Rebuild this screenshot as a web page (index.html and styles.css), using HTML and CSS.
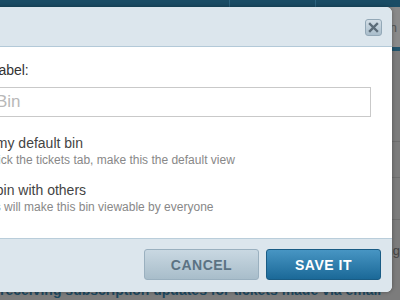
FILE: index.html
```html
<!DOCTYPE html>
<html lang="en">
<head>
  <meta charset="UTF-8">
  <title>Add New Bin</title>
  <link rel="stylesheet" href="styles.css">
</head>
<body>
  <!-- page behind the dialog (dimmed) -->
  <div class="page">
    <div class="topbar">
      <span class="nav-item first"></span>
      <span class="nav-item"></span>
      <span class="nav-item"></span>
    </div>
    <div class="subbar"><span>Assign</span></div>
    <div class="band"></div>
    <div class="row tall"></div>
    <div class="row"></div>
    <div class="row mid"></div>
    <div class="row short"><span>Showing</span></div>
    <p class="note">receiving subscription updates for tickets made via email</p>
  </div>

  <!-- dialog -->
  <div class="modal">
    <div class="modal-header">
      <h3>Add New Bin</h3>
      <button class="close" title="Close">
        <svg width="11" height="11" viewBox="0 0 11 11">
          <path d="M2 2 L9 9 M9 2 L2 9" stroke="#5b6b78" stroke-width="2.4" stroke-linecap="square"/>
        </svg>
      </button>
    </div>

    <div class="modal-body">
      <label class="field-label" for="binLabel">Choose your label:</label>
      <input type="text" id="binLabel" placeholder="Your new Bin">

      <label class="option">
        <input type="checkbox">
        <span class="option-text">
          <span class="option-title">Make this my default bin</span>
          <span class="option-help">When you click the tickets tab, make this the default view</span>
        </span>
      </label>

      <label class="option">
        <input type="checkbox">
        <span class="option-text">
          <span class="option-title">Share my bin with others</span>
          <span class="option-help">Enabling this will make this bin viewable by everyone</span>
        </span>
      </label>
    </div>

    <div class="modal-footer">
      <button class="btn btn-cancel">Cancel</button>
      <button class="btn btn-save">Save it</button>
    </div>
  </div>
</body>
</html>
```

FILE: styles.css
```css
body {
  font-family: "Liberation Sans", Arial, sans-serif;
  margin: 0;
  padding: 0;
  background: #7c7c7c;
  width: 400px;
  height: 300px;
  overflow: hidden;
  position: relative;
}

/* background page */
.page {
  height: 300px;
}
.topbar {
  display: flex;
  height: 7px;
  background: #1a4c65;
}
.nav-item {
  width: 100px;
  border-left: 1px solid #2d6480;
}
.nav-item.first {
  width: 272px;
  border-left: none;
}
.subbar {
  height: 40px;
  background: #8a8a8a;
  display: flex;
  justify-content: flex-end;
  align-items: center;
  padding-right: 3px;
  font-size: 13px;
  color: #555;
}
.band {
  height: 4px;
  background: #23556d;
}
.row {
  height: 35px;
  border-bottom: 1px solid #6e6e6e;
}
.row.tall {
  height: 90px;
}
.row.mid {
  height: 41px;
}
.row.short {
  height: 61px;
  display: flex;
  justify-content: flex-end;
  align-items: center;
  font-size: 13px;
  color: #444;
  border-bottom: none;
}
.note {
  margin: 0;
  font-size: 14px;
  font-weight: bold;
  color: #1d4961;
  white-space: nowrap;
  line-height: 18px;
}

/* dialog */
.modal {
  position: absolute;
  left: -120px;
  top: 7px;
  width: 512px;
  background: #fff;
  border-radius: 0 6px 6px 0;
  box-shadow: 0 0 4px rgba(0,0,0,0.35);
  overflow: hidden;
}
.modal-header {
  display: flex;
  align-items: center;
  justify-content: space-between;
  height: 39px;
  padding: 0 10px 0 32px;
  background: #dce6ed;
  border-bottom: 1px solid #b3c9d8;
}
.modal-header h3 {
  margin: 0;
  font-size: 14px;
  color: #5687a6;
}
.close {
  width: 17px;
  height: 17px;
  padding: 0;
  display: flex;
  align-items: center;
  justify-content: center;
  border: 1px solid #93a8b7;
  border-radius: 3px;
  background: linear-gradient(#d3dee6, #a9bdcb);
  margin-top: 2px;
}
.modal-body {
  padding: 13px 21px 23px 32px;
}
.field-label {
  display: block;
  font-size: 14px;
  line-height: 20px;
  color: #333;
  margin-bottom: 7px;
}
input[type="text"] {
  display: block;
  width: 100%;
  height: 30px;
  box-sizing: border-box;
  padding: 0 8px;
  font-family: inherit;
  font-size: 17px;
  border: 1px solid #c9c9c9;
  margin: 0 0 17px;
}
input[type="text"]::placeholder {
  color: #b8b8b8;
}
.option {
  display: flex;
  align-items: flex-start;
  margin-bottom: 13px;
}
.option:last-child {
  margin-bottom: 0;
}
.option input {
  width: 13px;
  height: 13px;
  margin: 3px 7px 0 0;
}
.option-title {
  display: block;
  font-size: 14px;
  line-height: 18px;
  color: #444;
}
.option-help {
  display: block;
  font-size: 12px;
  line-height: 16px;
  color: #888;
}
.modal-footer {
  display: flex;
  justify-content: flex-end;
  gap: 7px;
  padding: 10px 11px 12px;
  background: #dce6ed;
  border-top: 1px solid #b9cdda;
}
.btn {
  width: 115px;
  height: 31px;
  font-family: inherit;
  font-size: 14px;
  font-weight: bold;
  letter-spacing: 0.5px;
  text-transform: uppercase;
  border-radius: 3px;
  cursor: pointer;
}
.btn-cancel {
  color: #5b7283;
  background: linear-gradient(#c9d8e2, #a8bdca);
  border: 1px solid #9ab0bf;
}
.btn-save {
  color: #fff;
  background: linear-gradient(#4795c3, #1b6998);
  border: 1px solid #195c85;
}
```
